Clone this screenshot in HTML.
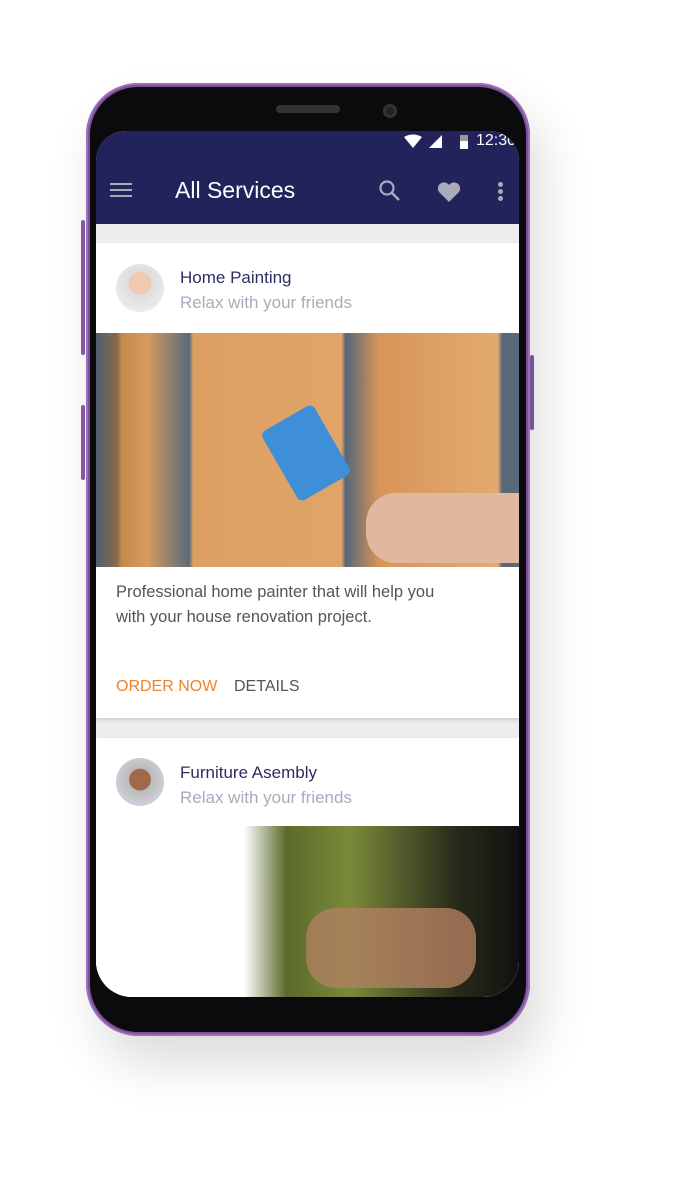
<!DOCTYPE html>
<html><head><style>
body{margin:0;width:697px;height:1200px;background:#fff;position:relative;overflow:hidden;font-family:"Liberation Sans",sans-serif}
.phone{position:absolute;left:86px;top:83px;width:444px;height:953px;border-radius:52px;background:#7d4f9c;box-shadow:inset 0 0 0 2px #9a70b8,12px 28px 50px rgba(0,0,0,.14)}
.inner{position:absolute;left:4px;top:4px;right:4px;bottom:4px;border-radius:48px;background:#0b0b0d}
.btn{position:absolute;background:#8a5aa8;width:4px;border-radius:2px}
.screen{position:absolute;left:96px;top:131px;width:423px;height:866px;border-radius:30px 30px 36px 36px;overflow:hidden;background:#eeeef0}
.hdr{position:absolute;left:0;top:0;width:423px;height:93px;background:#22235a}
.card{position:absolute;left:0;width:423px;background:#fff;box-shadow:0 2px 4px rgba(0,0,0,.15)}
.av{position:absolute;left:20px;width:48px;height:48px;border-radius:50%}
.t1{position:absolute;left:84px;font-size:17px;color:#2c2f5e}
.t2{position:absolute;left:84px;font-size:17px;color:#a9abbd}
</style></head><body>
<div class="btn" style="left:81px;top:220px;height:135px"></div>
<div class="btn" style="left:81px;top:405px;height:75px"></div>
<div class="btn" style="left:530px;top:355px;height:75px"></div>
<div class="phone"><div class="inner"></div></div>
<div style="position:absolute;left:276px;top:105px;width:64px;height:8px;border-radius:4px;background:#333"></div>
<div style="position:absolute;left:383px;top:104px;width:14px;height:14px;border-radius:50%;background:#222;box-shadow:inset 0 0 0 3px #333"></div>
<div class="screen">
 <div class="hdr">
  <svg style="position:absolute;left:306px;top:2px" width="75" height="18"><path d="M2 4 Q11 -1 20 4 L11 15Z" fill="#fff"/><path d="M27 15 L40 2 L40 15Z" fill="#fff"/><rect x="58" y="2" width="8" height="14" fill="#fff"/><rect x="58" y="2" width="8" height="6" fill="#999"/></svg>
  <div style="position:absolute;left:380px;top:1px;color:#fff;font-size:16px">12:30</div>
  <div style="position:absolute;left:14px;top:52px;width:22px;height:2px;background:#aab;box-shadow:0 6px 0 #aab,0 12px 0 #aab"></div>
  <div style="position:absolute;left:79px;top:46px;color:#fff;font-size:23px">All Services</div>
  <svg style="position:absolute;left:282px;top:48px" width="24" height="24"><circle cx="9" cy="9" r="6.5" stroke="#aab" stroke-width="2.2" fill="none"/><path d="M14 14 L21 21" stroke="#aab" stroke-width="2.5"/></svg>
  <svg style="position:absolute;left:340px;top:49px" width="26" height="24"><path d="M13 22 L3 12 A5.5 5.5 0 0 1 13 5 A5.5 5.5 0 0 1 23 12Z" fill="#aab"/></svg>
  <div style="position:absolute;left:402px;top:51px;width:5px;height:5px;border-radius:50%;background:#aab;box-shadow:0 7px 0 #aab,0 14px 0 #aab"></div>
 </div>
 <div class="card" style="top:112px;height:475px">
  <div class="av" style="top:21px;background:radial-gradient(circle at 50% 40%,#f1c9b0 0 30%,#ddd 31%,#f4f4f4)"></div>
  <div class="t1" style="top:25px">Home Painting</div>
  <div class="t2" style="top:50px">Relax with your friends</div>
  <div style="position:absolute;left:0;top:90px;width:423px;height:234px;background:linear-gradient(90deg,#4e5e6e 0,#8a6a4a 5%,#c5884c 6%,#d89b5c 12%,#5a6b7b 22%,#dca063 23%,#e0a469 58%,#566879 59%,#d89558 67%,#e2aa70 95%,#5a6878 96%)"></div>
  <div style="position:absolute;left:180px;top:170px;width:60px;height:80px;background:#3e8fd8;transform:rotate(-30deg);border-radius:6px"></div>
  <div style="position:absolute;left:270px;top:250px;width:153px;height:70px;background:#e0b8a0;border-radius:30px 0 0 30px"></div>
  <div style="position:absolute;left:20px;top:337px;font-size:16.5px;line-height:25px;color:#555">Professional home painter that will help you<br>with your house renovation project.</div>
  <div style="position:absolute;left:20px;top:435px;font-size:16px;color:#f0832a">ORDER NOW</div>
  <div style="position:absolute;left:138px;top:435px;font-size:16px;color:#555">DETAILS</div>
 </div>
 <div class="card" style="top:607px;height:300px">
  <div class="av" style="top:20px;background:radial-gradient(circle at 50% 45%,#a06a4a 0 30%,#bbb 31%,#dde)"></div>
  <div class="t1" style="top:25px">Furniture Asembly</div>
  <div class="t2" style="top:50px">Relax with your friends</div>
  <div style="position:absolute;left:0;top:88px;width:423px;height:172px;background:linear-gradient(90deg,#fff 0,#fff 35%,#5a6a2a 45%,#7a8a3a 60%,#2a2a1a 85%,#111 100%)"></div>
  <div style="position:absolute;left:210px;top:170px;width:170px;height:80px;background:#b08060;border-radius:30px;opacity:.8"></div>
 </div>
</div>
</body></html>
